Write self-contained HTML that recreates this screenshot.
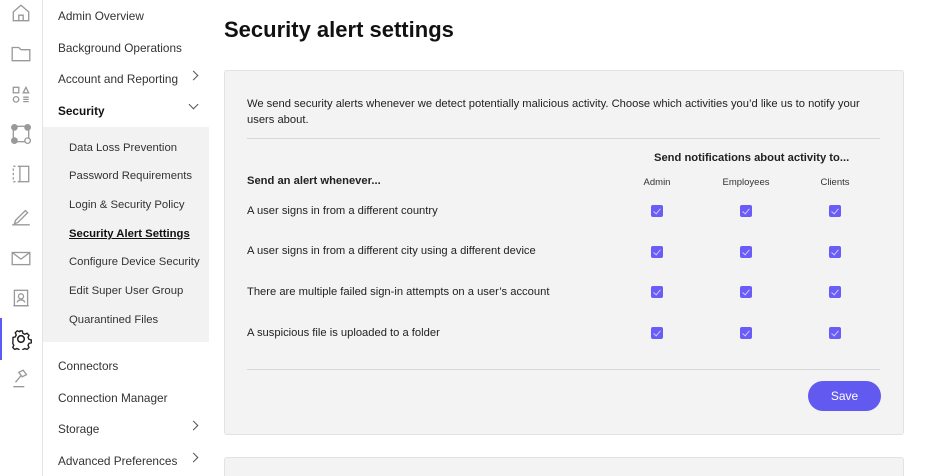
<!DOCTYPE html>
<html><head><meta charset="utf-8"><style>
*{margin:0;padding:0;box-sizing:border-box}
html,body{width:936px;height:476px;overflow:hidden}
body{background:#fff;font-family:"Liberation Sans",sans-serif;color:#222;position:relative}
.rail{position:absolute;left:0;top:0;width:43px;height:476px;border-right:1px solid #e4e4e4}
.rail svg{position:absolute;left:10px;width:22px;height:22px;fill:none;stroke:#999;stroke-width:1.2}
.active{position:absolute;left:0;top:318px;width:2px;height:42px;background:#5b5cf6}
.nav{position:absolute;left:58px;font-size:11.8px;color:#333}
.sub{position:absolute;left:43px;top:127px;width:166px;height:215px;background:#f2f2f2}
.s{position:absolute;left:69px;font-size:11.3px;color:#333}
.chev{position:absolute;left:190px;width:7px;height:7px;border-right:1.3px solid #555;border-bottom:1.3px solid #555}
h1{position:absolute;left:224px;top:17px;font-size:22px;font-weight:bold;color:#111}
.panel{position:absolute;left:224px;top:70px;width:680px;height:365px;background:#f3f3f3;border:1px solid #e2e2e2;border-radius:3px}
.panel2{position:absolute;left:224px;top:457px;width:680px;height:40px;background:#f3f3f3;border:1px solid #e2e2e2;border-radius:3px}
.t{position:absolute;font-size:11.2px;color:#222}
.hr{position:absolute;left:247px;width:633px;height:1px;background:#d8d8d8}
.cb{position:absolute;width:12px;height:12px;background:#6a5cf6;border-radius:2px}
.cb:after{content:"";position:absolute;left:4px;top:1.5px;width:3px;height:6px;border-right:1px solid #cfc9ff;border-bottom:1px solid #cfc9ff;transform:rotate(40deg)}
.col{position:absolute;font-size:9.5px;color:#333;transform:translateX(-50%)}
.btn{position:absolute;left:808px;top:381px;width:73px;height:30px;border-radius:15px;background:#6159f0;color:#fff;font-size:12px;text-align:center;line-height:30px}
</style></head><body>
<div class="rail">
<svg style="top:2px" viewBox="0 0 20 20"><path d="M3 9L10 3l7 6v8H3z M8 17v-5h4v5"/></svg>
<svg style="top:42px" viewBox="0 0 20 20"><path d="M2 5h6l2 2h8v10H2z"/></svg>
<svg style="top:84px" viewBox="0 0 20 20"><rect x="3" y="3" width="5" height="5"/><path d="M12 8l2.5-5 2.5 5z"/><circle cx="5.5" cy="14" r="2.5"/><path d="M12 12h5M12 14h5M12 16h5"/></svg>
<svg style="top:123px" viewBox="0 0 20 20"><rect x="3" y="3" width="14" height="14"/><circle cx="4" cy="4" r="2.5" fill="#999"/><circle cx="16" cy="4" r="2.5" fill="#999"/><circle cx="4" cy="16" r="2.5" fill="#999"/><circle cx="16" cy="16" r="2.5" fill="#fff"/></svg>
<svg style="top:163px" viewBox="0 0 20 20"><path d="M9 3H3v14h6" stroke-dasharray="2 2"/><rect x="9" y="3" width="8" height="14"/></svg>
<svg style="top:205px" viewBox="0 0 20 20"><path d="M5 14L14 5l2 2-9 9-3 1zM2 18h16"/></svg>
<svg style="top:247px" viewBox="0 0 20 20"><rect x="2" y="5" width="16" height="11"/><path d="M2 5l8 6 8-6"/></svg>
<svg style="top:287px" viewBox="0 0 20 20"><rect x="4" y="3" width="12" height="14"/><circle cx="10" cy="8.5" r="2.3"/><path d="M6.5 14c1-3 6-3 7 0M3 17h14"/></svg>
<svg style="top:328px;stroke:#222;stroke-width:1.4" viewBox="0 0 20 20"><circle cx="10" cy="10" r="3"/><path d="M8.5 2h3l.5 2.3 2 1 2.2-1 2 2-1 2.2 1 2 2.3.5v3l-2.3.5-1 2 1 2.2-2 2-2.2-1-2 1-.5 2.3h-3l-.5-2.3-2-1-2.2 1-2-2 1-2.2-1-2L2 11.5v-3l2.3-.5 1-2-1-2.2 2-2 2.2 1 2-1z" transform="scale(.9) translate(1 1)"/></svg>
<svg style="top:368px" viewBox="0 0 20 20"><path d="M8 4l4-2 3 4-4 2zM10 7l-5 6M3 17h10"/></svg>
<div class="active"></div>
</div>
<div class="nav" style="top:9px">Admin Overview</div>
<div class="nav" style="top:41px">Background Operations</div>
<div class="nav" style="top:72px">Account and Reporting</div><div class="chev" style="top:72px;transform:rotate(-45deg)"></div>
<div class="nav" style="top:104px;font-weight:bold;color:#111">Security</div><div class="chev" style="top:101px;transform:rotate(45deg)"></div>
<div class="sub"></div>
<div class="s" style="top:142px">Data Loss Prevention</div>
<div class="s" style="top:170px">Password Requirements</div>
<div class="s" style="top:199px">Login &amp; Security Policy</div>
<div class="s" style="top:228px;font-weight:bold;color:#111;text-decoration:underline">Security Alert Settings</div>
<div class="s" style="top:256px">Configure Device Security</div>
<div class="s" style="top:285px">Edit Super User Group</div>
<div class="s" style="top:314px">Quarantined Files</div>
<div class="nav" style="top:359px">Connectors</div>
<div class="nav" style="top:391px">Connection Manager</div>
<div class="nav" style="top:422px">Storage</div><div class="chev" style="top:422px;transform:rotate(-45deg)"></div>
<div class="nav" style="top:454px">Advanced Preferences</div><div class="chev" style="top:454px;transform:rotate(-45deg)"></div>

<h1>Security alert settings</h1>
<div class="panel"></div>
<div class="panel2"></div>
<div class="t" style="left:247px;top:96px;width:630px;line-height:16px">We send security alerts whenever we detect potentially malicious activity. Choose which activities you’d like us to notify your users about.</div>
<div class="hr" style="top:138px"></div>
<div class="t" style="left:654px;top:152px;font-weight:bold">Send notifications about activity to...</div>
<div class="t" style="left:247px;top:175px;font-weight:bold">Send an alert whenever...</div>
<div class="col" style="left:657px;top:177px">Admin</div>
<div class="col" style="left:746px;top:177px">Employees</div>
<div class="col" style="left:835px;top:177px">Clients</div>
<div class="t" style="left:247px;top:205px">A user signs in from a different country</div>
<div class="t" style="left:247px;top:245px">A user signs in from a different city using a different device</div>
<div class="t" style="left:247px;top:286px">There are multiple failed sign-in attempts on a user’s account</div>
<div class="t" style="left:247px;top:327px">A suspicious file is uploaded to a folder</div>
<div class="cb" style="left:651px;top:205px"></div><div class="cb" style="left:740px;top:205px"></div><div class="cb" style="left:829px;top:205px"></div>
<div class="cb" style="left:651px;top:246px"></div><div class="cb" style="left:740px;top:246px"></div><div class="cb" style="left:829px;top:246px"></div>
<div class="cb" style="left:651px;top:286px"></div><div class="cb" style="left:740px;top:286px"></div><div class="cb" style="left:829px;top:286px"></div>
<div class="cb" style="left:651px;top:327px"></div><div class="cb" style="left:740px;top:327px"></div><div class="cb" style="left:829px;top:327px"></div>
<div class="hr" style="top:369px"></div>
<div class="btn">Save</div>
</body></html>
